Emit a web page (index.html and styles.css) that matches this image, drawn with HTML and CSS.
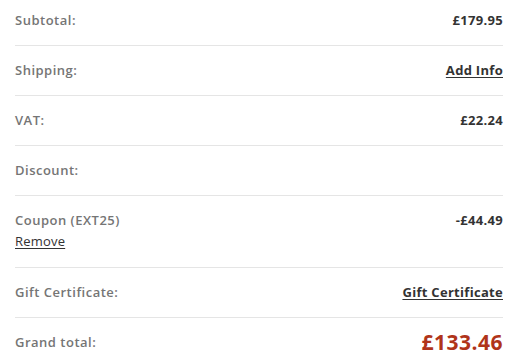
FILE: index.html
```html
<!DOCTYPE html>
<html>
<head>
<meta charset="utf-8">
<link rel="stylesheet" href="styles.css">
</head>
<body>
<ul class="totals">
  <li class="row">
    <span class="label">Subtotal:</span>
    <span class="value">£179.95</span>
  </li>
  <li class="row">
    <span class="label">Shipping:</span>
    <a class="value link">Add Info</a>
  </li>
  <li class="row">
    <span class="label">VAT:</span>
    <span class="value">£22.24</span>
  </li>
  <li class="row">
    <span class="label">Discount:</span>
    <span class="value"></span>
  </li>
  <li class="row row-top">
    <div class="stack">
      <span class="label">Coupon (EXT25)</span>
      <a class="remove">Remove</a>
    </div>
    <span class="value">-£44.49</span>
  </li>
  <li class="row">
    <span class="label">Gift Certificate:</span>
    <a class="value link">Gift Certificate</a>
  </li>
  <li class="row row-last">
    <span class="label">Grand total:</span>
    <span class="value grand">£133.46</span>
  </li>
</ul>
</body>
</html>
```

FILE: styles.css
```css
html, body {
  margin: 0;
  padding: 0;
  background: #fff;
}
body {
  font-family: "Open Sans", "Liberation Sans", sans-serif;
  font-size: 13px;
  color: #333;
}
.totals {
  list-style: none;
  margin: -4px 0 0 0;
  padding: 0 22px 0 15px;
}
.row {
  display: flex;
  justify-content: space-between;
  align-items: center;
  padding: 15px 0;
  line-height: 19px;
  border-bottom: 1px solid #e5e5e5;
}
.row-top {
  align-items: flex-start;
  padding-bottom: 16px;
}
.row-last {
  border-bottom: none;
}
.stack {
  display: flex;
  flex-direction: column;
}
.label {
  color: #757575;
  font-weight: 600;
  letter-spacing: 0.5px;
}
.value {
  color: #333;
  font-weight: 700;
  letter-spacing: 0.3px;
}
.link {
  text-decoration: underline;
  text-underline-offset: 2px;
}
.remove {
  color: #333;
  text-decoration: underline;
  text-underline-offset: 2px;
  margin-top: 2px;
  letter-spacing: 0.2px;
}
.grand {
  color: #b0341a;
  font-size: 21px;
  line-height: 19px;
  letter-spacing: 0.5px;
}
```
